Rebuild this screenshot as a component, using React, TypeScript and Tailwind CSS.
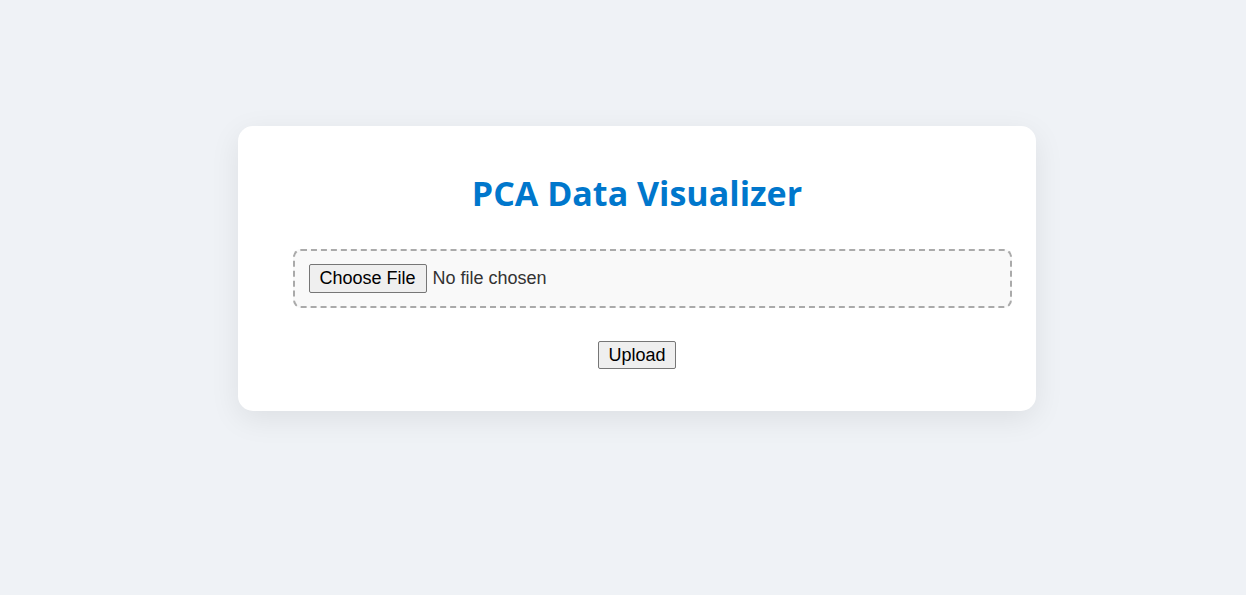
export default function App() {
  return (
    <div className="min-h-[595px] w-full bg-[#eff2f6] pt-[126px] pl-[238px] font-['Liberation_Sans',Arial,sans-serif]">
      <div className="w-[798px] rounded-[15px] bg-white px-[40px] pt-[47px] pb-[42px] shadow-[0_8px_30px_rgba(0,0,0,0.08)]">
        <h1 className="text-center font-['Open_Sans',sans-serif] text-[34px] font-bold leading-[40px] text-[#0077cc]">
          PCA Data Visualizer
        </h1>

        {/* Upload form */}
        <form className="mt-[36px] flex flex-col items-center">
          <label className="ml-[30px] flex h-[59px] w-[719px] cursor-pointer items-center rounded-[8px] border-2 border-dashed border-[#aaaaaa] bg-[#f9f9f9] px-[14px]">
            <span className="flex h-[29px] items-center rounded-[2px] border border-[#767676] bg-[#efefef] px-[10px] text-[18px] text-black">
              Choose File
            </span>
            <span className="ml-[6px] text-[18px] text-[#333333]">No file chosen</span>
          </label>
          <button
            type="button"
            className="mt-[33px] h-[28px] rounded-[2px] border border-[#767676] bg-[#efefef] px-[9px] text-[18px] leading-none text-black"
          >
            Upload
          </button>
        </form>
      </div>
    </div>
  );
}
